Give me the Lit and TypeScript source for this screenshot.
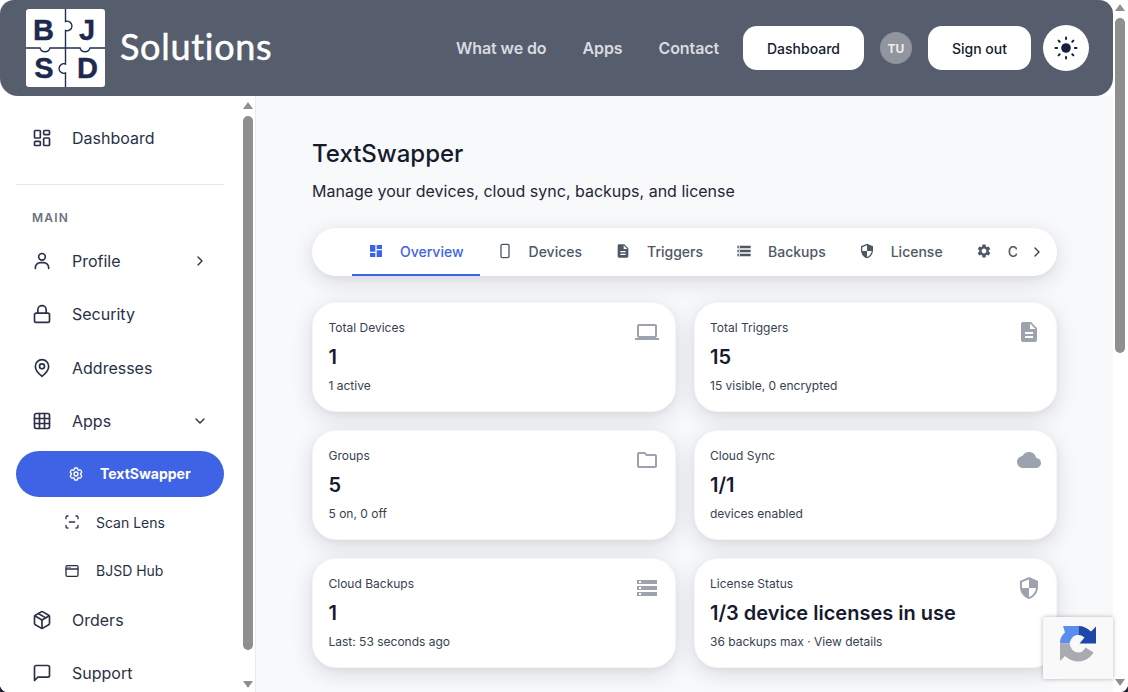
import { css, html, svg, LitElement } from 'lit';
import { customElement } from 'lit/decorators.js';

const line = (...d: string[]) => html`<svg class="ic" viewBox="0 0 24 24" fill="none" stroke="currentColor" stroke-width="2" stroke-linecap="round" stroke-linejoin="round">${d.map((p) => svg`<path d=${p}></path>`)}</svg>`;
const fill = (...d: string[]) => html`<svg class="ic" viewBox="0 0 24 24" fill="currentColor">${d.map((p) => svg`<path d=${p}></path>`)}</svg>`;

const icons = {
  dashboard: line('M4 3h5a1 1 0 0 1 1 1v7a1 1 0 0 1-1 1H4a1 1 0 0 1-1-1V4a1 1 0 0 1 1-1z', 'M15 3h5a1 1 0 0 1 1 1v3a1 1 0 0 1-1 1h-5a1 1 0 0 1-1-1V4a1 1 0 0 1 1-1z', 'M15 12h5a1 1 0 0 1 1 1v7a1 1 0 0 1-1 1h-5a1 1 0 0 1-1-1v-7a1 1 0 0 1 1-1z', 'M4 16h5a1 1 0 0 1 1 1v3a1 1 0 0 1-1 1H4a1 1 0 0 1-1-1v-3a1 1 0 0 1 1-1z'),
  user: line('M12 3a4 4 0 1 0 0 8 4 4 0 0 0 0-8z', 'M20 21v-1a6 6 0 0 0-6-6h-4a6 6 0 0 0-6 6v1'),
  lock: line('M5 11h14a2 2 0 0 1 2 2v7a2 2 0 0 1-2 2H5a2 2 0 0 1-2-2v-7a2 2 0 0 1 2-2z', 'M7 11V7a5 5 0 0 1 10 0v4'),
  pin: line('M20 10c0 6-8 12-8 12s-8-6-8-12a8 8 0 0 1 16 0z', 'M12 7a3 3 0 1 0 0 6 3 3 0 0 0 0-6z'),
  grid: line('M5 3h14a2 2 0 0 1 2 2v14a2 2 0 0 1-2 2H5a2 2 0 0 1-2-2V5a2 2 0 0 1 2-2z', 'M3 9h18', 'M3 15h18', 'M9 3v18', 'M15 3v18'),
  cog: line('M9.594 3.94c.09-.542.56-.94 1.11-.94h2.593c.55 0 1.02.398 1.11.94l.213 1.281c.063.374.313.686.645.87.074.04.147.083.22.127.325.196.72.257 1.075.124l1.217-.456a1.125 1.125 0 0 1 1.37.49l1.296 2.247a1.125 1.125 0 0 1-.26 1.431l-1.003.827c-.293.241-.438.613-.43.992a7.723 7.723 0 0 1 0 .255c-.008.378.137.75.43.991l1.004.827c.424.35.534.955.26 1.43l-1.298 2.247a1.125 1.125 0 0 1-1.369.491l-1.217-.456c-.355-.133-.75-.072-1.076.124a6.47 6.47 0 0 1-.22.128c-.331.183-.581.495-.644.869l-.213 1.281c-.09.543-.56.94-1.11.94h-2.594c-.55 0-1.019-.398-1.11-.94l-.213-1.281c-.062-.374-.312-.686-.644-.87a6.52 6.52 0 0 1-.22-.127c-.325-.196-.72-.257-1.076-.124l-1.217.456a1.125 1.125 0 0 1-1.369-.49l-1.297-2.247a1.125 1.125 0 0 1 .26-1.431l1.004-.827c.292-.24.437-.613.43-.991a6.932 6.932 0 0 1 0-.255c.007-.38-.138-.751-.43-.992l-1.004-.827a1.125 1.125 0 0 1-.26-1.43l1.297-2.247a1.125 1.125 0 0 1 1.37-.491l1.216.456c.356.133.751.072 1.076-.124.072-.044.146-.086.22-.128.332-.183.582-.495.644-.869l.214-1.28z', 'M12 9a3 3 0 1 0 0 6 3 3 0 0 0 0-6z'),
  scan: line('M3 7V5a2 2 0 0 1 2-2h1', 'M18 3h1a2 2 0 0 1 2 2v2', 'M21 17v2a2 2 0 0 1-2 2h-1', 'M6 21H5a2 2 0 0 1-2-2v-2', 'M8 12h8'),
  windowed: line('M5 4h14a2 2 0 0 1 2 2v12a2 2 0 0 1-2 2H5a2 2 0 0 1-2-2V6a2 2 0 0 1 2-2z', 'M3 9h18', 'M6 6.5h.01', 'M9 6.5h.01'),
  box: line('M21 8a2 2 0 0 0-1-1.73l-7-4a2 2 0 0 0-2 0l-7 4A2 2 0 0 0 3 8v8a2 2 0 0 0 1 1.73l7 4a2 2 0 0 0 2 0l7-4A2 2 0 0 0 21 16z', 'M3.3 7l8.7 5 8.7-5', 'M12 22V12', 'M7.5 4.27l9 5.15'),
  chat: line('M21 15a2 2 0 0 1-2 2H7l-4 4V5a2 2 0 0 1 2-2h14a2 2 0 0 1 2 2z'),
  right: line('M9 6l6 6-6 6'),
  down: line('M6 9l6 6 6-6'),
  overview: fill('M3 13h8V3H3v10zm0 8h8v-6H3v6zm10 0h8V11h-8v10zm0-18v6h8V3h-8z'),
  phone: line('M8 2h8a2 2 0 0 1 2 2v16a2 2 0 0 1-2 2H8a2 2 0 0 1-2-2V4a2 2 0 0 1 2-2z'),
  doc: fill('M14 2H6c-1.1 0-1.99.9-1.99 2L4 20c0 1.1.89 2 1.99 2H18c1.1 0 2-.9 2-2V8l-6-6zm2 16H8v-2h8v2zm0-4H8v-2h8v2zm-3-5V3.5L18.5 9H13z'),
  rows: fill('M2 20h20v-4H2v4zm2-3h2v2H4v-2zM2 4v4h20V4H2zm4 3H4V5h2v2zm-4 7h20v-4H2v4zm2-3h2v2H4v-2z'),
  shield: fill('M12 1L3 5v6c0 5.55 3.84 10.74 9 12 5.16-1.26 9-6.45 9-12V5l-9-4zm0 10.99h7c-.53 4.12-3.28 7.79-7 8.94V12H5V6.3l7-3.11v8.8z'),
  gear: fill('M19.14 12.94c.04-.3.06-.61.06-.94 0-.32-.02-.64-.07-.94l2.03-1.58c.18-.14.23-.41.12-.61l-1.92-3.32c-.12-.22-.37-.29-.59-.22l-2.39.96c-.5-.38-1.03-.7-1.62-.94L14.4 2.81c-.04-.24-.24-.41-.48-.41h-3.84c-.24 0-.43.17-.47.41L9.25 5.35c-.59.24-1.13.57-1.62.94l-2.39-.96c-.22-.08-.47 0-.59.22L2.74 8.87c-.12.21-.08.47.12.61l2.03 1.58c-.05.3-.09.63-.09.94s.02.64.07.94l-2.03 1.58c-.18.14-.23.41-.12.61l1.92 3.32c.12.22.37.29.59.22l2.39-.96c.5.38 1.03.7 1.62.94l.36 2.54c.05.24.24.41.48.41h3.84c.24 0 .44-.17.47-.41l.36-2.54c.59-.24 1.13-.56 1.62-.94l2.39.96c.22.08.47 0 .59-.22l1.92-3.32c.12-.22.07-.47-.12-.61l-2.01-1.58zM12 15.6c-1.98 0-3.6-1.62-3.6-3.6s1.62-3.6 3.6-3.6 3.6 1.62 3.6 3.6-1.62 3.6-3.6 3.6z'),
  laptop: fill('M20 18c1.1 0 1.99-.9 1.99-2L22 6c0-1.1-.9-2-2-2H4c-1.1 0-2 .9-2 2v10c0 1.1.9 2 2 2H0v2h24v-2h-4zM4 6h16v10H4V6z'),
  folder: fill('M9.17 6l2 2H20v10H4V6h5.17M10 4H4c-1.1 0-1.99.9-1.99 2L2 18c0 1.1.9 2 2 2h16c1.1 0 2-.9 2-2V8c0-1.1-.9-2-2-2h-8l-2-2z'),
  cloud: fill('M19.35 10.04C18.67 6.59 15.64 4 12 4 9.11 4 6.6 5.64 5.35 8.04 2.34 8.36 0 10.91 0 14c0 3.31 2.69 6 6 6h13c2.76 0 5-2.24 5-5 0-2.64-2.05-4.78-4.65-4.96z'),
};

const tabs = [
  ['Overview', icons.overview],
  ['Devices', icons.phone],
  ['Triggers', icons.doc],
  ['Backups', icons.rows],
  ['License', icons.shield],
  ['Cloud', icons.gear],
] as const;

const cards = [
  ['Total Devices', '1', '1 active', icons.laptop],
  ['Total Triggers', '15', '15 visible, 0 encrypted', icons.doc],
  ['Groups', '5', '5 on, 0 off', icons.folder],
  ['Cloud Sync', '1/1', 'devices enabled', icons.cloud],
  ['Cloud Backups', '1', 'Last: 53 seconds ago', icons.rows],
  ['License Status', '1/3 device licenses in use', '36 backups max · View details', icons.shield],
] as const;

@customElement('app-root')
export class AppRoot extends LitElement {
  static override styles = css`
    :host {
      display: block;
      height: 692px;
      overflow: hidden;
      background: #20242c;
      font-family: Inter, 'Liberation Sans', sans-serif;
    }

    * {
      box-sizing: border-box;
    }

    .ic {
      display: block;
      width: 100%;
      height: 100%;
    }

    .page {
      position: relative;
      display: grid;
      grid-template-columns: 1fr 15px;
      height: 692px;
      overflow: hidden;
      background: #fff;
      border-radius: 0 0 8px 8px;
    }

    .left {
      display: flex;
      flex-direction: column;
      min-width: 0;
      height: 692px;
      background: #f8f9fb;
    }

    .header-wrap {
      background: #fff;
    }

    header {
      flex: none;
      display: flex;
      align-items: center;
      height: 96px;
      padding: 0 24px 0 26px;
      background: #565d6d;
      border-radius: 14px 14px 18px 18px;
    }

    .logo {
      display: block;
      width: 79px;
      height: 78px;
      flex: none;
    }

    .logo text {
      font-family: 'Liberation Sans', sans-serif;
      font-weight: 700;
      font-size: 29px;
      fill: #1b2a4d;
      stroke: #1b2a4d;
      stroke-width: 0.4px;
      text-anchor: middle;
    }

    .brand {
      margin: 0 0 5px 15px;
      font-family: Lato, sans-serif;
      font-size: 36px;
      line-height: 40px;
      font-weight: 400;
      letter-spacing: 0.7px;
      -webkit-text-stroke: 0.5px #fff;
      color: #fff;
    }

    .links {
      display: flex;
      gap: 36px;
      margin-left: auto;
    }

    .links span {
      font-size: 16px;
      font-weight: 600;
      letter-spacing: -0.1px;
      color: #d9dbe0;
    }

    .btn {
      display: flex;
      align-items: center;
      justify-content: center;
      height: 44px;
      border-radius: 14px;
      background: #fff;
      font-size: 14px;
      font-weight: 500;
      color: #151b2e;
    }

    .btn.dash {
      width: 121px;
      margin-left: 24px;
    }

    .btn.out {
      width: 103px;
      margin-left: 16px;
    }

    .avatar {
      display: flex;
      align-items: center;
      justify-content: center;
      width: 32px;
      height: 32px;
      margin-left: 16px;
      border-radius: 50%;
      background: #92959f;
      font-size: 12px;
      font-weight: 700;
      color: #eceef1;
    }

    .theme {
      display: flex;
      align-items: center;
      justify-content: center;
      width: 46px;
      height: 46px;
      margin-left: 12px;
      border-radius: 50%;
      background: #fff;
    }

    .theme svg {
      display: block;
      width: 24px;
      height: 24px;
    }

    .body {
      flex: 1;
      display: flex;
      min-height: 0;
    }

    aside {
      flex: none;
      display: flex;
      width: 256px;
      background: #fff;
      border-right: 1px solid #e9ebef;
      overflow: hidden;
    }

    nav {
      flex: none;
      width: 240px;
      padding-top: 15.3px;
      color: #2a3147;
    }

    .item {
      display: flex;
      align-items: center;
      height: 53.33px;
      margin: 0 16px;
      padding: 0 16px;
      font-size: 16px;
    }

    .item .i {
      flex: none;
      width: 20px;
      height: 20px;
      margin-right: 20px;
    }

    .item .chev {
      flex: none;
      width: 16px;
      height: 16px;
      margin-left: auto;
    }

    .rule {
      height: 1px;
      margin: 19px 16px 26.2px;
      background: #e7e9ee;
    }

    .section {
      margin: -0.5px 32px 8px;
      font-size: 12px;
      line-height: 16px;
      font-weight: 600;
      letter-spacing: 1.2px;
      color: #6b7280;
    }

    .subs {
      display: flex;
      flex-direction: column;
      gap: 2.5px;
      margin: 3px 0 -0.4px;
    }

    .sub {
      display: flex;
      align-items: center;
      height: 46px;
      margin: 0 16px;
      padding-left: 48px;
      border-radius: 23px;
      font-size: 14px;
    }

    .sub .i {
      flex: none;
      width: 16px;
      height: 16px;
      margin-right: 16px;
    }

    .sub.on {
      padding-left: 52px;
      background: #3f63e5;
      color: #fff;
      font-weight: 700;
    }

    .bar {
      flex: none;
      display: flex;
      flex-direction: column;
      align-items: center;
      width: 10px;
    }

    aside .bar {
      margin-left: 3px;
      padding: 6px 0 4px;
    }

    .rail {
      background: #fff;
      padding: 4px 3px 6px 2px;
      height: 692px;
    }

    .rail .bar {
      height: 100%;
    }

    .up,
    .dn {
      flex: none;
      width: 0;
      height: 0;
      border-left: 5px solid transparent;
      border-right: 5px solid transparent;
    }

    .up {
      border-bottom: 7px solid #8f8f8f;
    }

    .dn {
      border-top: 7px solid #8f8f8f;
      margin-top: auto;
    }

    .thumb {
      width: 10px;
      border-radius: 5px;
      background: #8f8f8f;
    }

    aside .thumb {
      height: 534px;
      margin-top: 7px;
    }

    .rail .thumb {
      height: 335px;
      margin-top: 7px;
    }

    main {
      flex: 1;
      min-width: 0;
      padding: 42px 56px 0;
      overflow: hidden;
    }

    h1 {
      margin: 0;
      font-size: 24px;
      line-height: 32px;
      font-weight: 500;
      color: #151b2e;
    }

    .lead {
      margin: 9px 0 25px;
      font-size: 16px;
      line-height: 24px;
      color: #1f2637;
    }

    .tabbar {
      position: relative;
      height: 48px;
      padding: 0 40px;
      border-radius: 24px;
      background: #fff;
      box-shadow: 0 6px 22px rgba(17, 24, 39, 0.13), 0 2px 6px rgba(17, 24, 39, 0.04);
    }

    .strip {
      display: flex;
      height: 48px;
      overflow: hidden;
    }

    .tab {
      flex: none;
      display: flex;
      align-items: center;
      height: 48px;
      padding: 0 16px;
      border-bottom: 2px solid transparent;
      font-size: 14px;
      font-weight: 500;
      color: #4f5766;
    }

    .tab + .tab {
      margin-left: 1px;
    }

    .tab .i {
      flex: none;
      width: 16px;
      height: 16px;
      margin-right: 16px;
    }

    .tab.on {
      border-bottom-color: #3f63e5;
      color: #3f63e5;
    }

    .more {
      position: absolute;
      top: 16px;
      right: 12px;
      width: 16px;
      height: 16px;
      color: #374151;
    }

    .grid {
      display: grid;
      grid-template-columns: 1fr 1fr;
      grid-auto-rows: 110px;
      gap: 18px;
      margin-top: 26px;
    }

    .card {
      position: relative;
      padding: 16px 15.5px;
      border: 1px solid #f6f7f9;
      border-radius: 24px;
      background: #fff;
      box-shadow: 0 6px 22px rgba(17, 24, 39, 0.13), 0 2px 6px rgba(17, 24, 39, 0.04);
    }

    .card .label {
      margin-top: 1px;
      font-size: 12px;
      line-height: 16px;
      color: #374151;
    }

    .card .value {
      margin-top: 7px;
      font-size: 20px;
      line-height: 28px;
      font-weight: 600;
      color: #151b2e;
    }

    .card .note {
      margin-top: 7px;
      font-size: 12px;
      line-height: 16px;
      color: #374151;
    }

    .card .i {
      position: absolute;
      top: 17px;
      right: 15.5px;
      width: 24px;
      height: 24px;
      color: #9ca3af;
    }

    .captcha {
      position: absolute;
      left: 1043px;
      top: 617px;
      width: 70px;
      height: 62px;
      padding: 8px 0 0 17px;
      background: #f9f9f9;
      box-shadow: 0 0 4px rgba(0, 0, 0, 0.28);
      border-radius: 2px 0 0 2px;
    }

    .captcha svg {
      display: block;
      width: 37px;
      height: 37px;
    }
  `;

  override render() {
    return html`
      <div class="page">
        <div class="left">
          <div class="header-wrap">
            <header>
              ${this.renderLogo()}
              <span class="brand">Solutions</span>
              <div class="links"><span>What we do</span><span>Apps</span><span>Contact</span></div>
              <div class="btn dash">Dashboard</div>
              <div class="avatar">TU</div>
              <div class="btn out">Sign out</div>
              <div class="theme">${this.renderSun()}</div>
            </header>
          </div>
          <div class="body">
            <aside>
              <nav>
                ${this.renderItem('Dashboard', icons.dashboard)}
                <div class="rule"></div>
                <div class="section">MAIN</div>
                ${this.renderItem('Profile', icons.user, icons.right)}
                ${this.renderItem('Security', icons.lock)}
                ${this.renderItem('Addresses', icons.pin)}
                ${this.renderItem('Apps', icons.grid, icons.down)}
                <div class="subs">
                  <div class="sub on"><span class="i">${icons.cog}</span>TextSwapper</div>
                  <div class="sub"><span class="i">${icons.scan}</span>Scan Lens</div>
                  <div class="sub"><span class="i">${icons.windowed}</span>BJSD Hub</div>
                </div>
                ${this.renderItem('Orders', icons.box)}
                ${this.renderItem('Support', icons.chat)}
              </nav>
              <div class="bar"><div class="up"></div><div class="thumb"></div><div class="dn"></div></div>
            </aside>
            <main>
              <h1>TextSwapper</h1>
              <p class="lead">Manage your devices, cloud sync, backups, and license</p>
              <div class="tabbar">
                <div class="strip">
                  ${tabs.map(([name, icon], i) => html`
                    <div class="tab ${i === 0 ? 'on' : ''}"><span class="i">${icon}</span>${name}</div>
                  `)}
                </div>
                <span class="more">${icons.right}</span>
              </div>
              <div class="grid">
                ${cards.map(([label, value, note, icon]) => html`
                  <div class="card">
                    <div class="label">${label}</div>
                    <div class="value">${value}</div>
                    <div class="note">${note}</div>
                    <span class="i">${icon}</span>
                  </div>
                `)}
              </div>
            </main>
          </div>
        </div>
        <div class="rail">
          <div class="bar"><div class="up"></div><div class="thumb"></div><div class="dn"></div></div>
        </div>
        <div class="captcha">${this.renderCaptcha()}</div>
      </div>
    `;
  }

  private renderItem(name: string, icon: unknown, chevron?: unknown) {
    return html`
      <div class="item">
        <span class="i">${icon}</span>${name}
        ${chevron ? html`<span class="chev">${chevron}</span>` : ''}
      </div>
    `;
  }

  private renderLogo() {
    return html`
      <svg class="logo" viewBox="0 0 79 78">
        <rect width="79" height="78" rx="3" fill="#fff"></rect>
        <path d="M39.5 0V12.5A4.8 4.8 0 1 1 39.5 21.5V55A4.8 4.8 0 1 0 39.5 64V78M0 39H14A5.2 5.2 0 0 0 24 39H54A5.2 5.2 0 0 0 64 39H79" fill="none" stroke="#1f2e52" stroke-width="1.4"></path>
        <text x="17.500" y="31">B</text>
        <text x="61" y="31">J</text>
        <text x="18" y="69">S</text>
        <text x="61.500" y="69">D</text>
      </svg>
    `;
  }

  private renderSun() {
    return html`
      <svg viewBox="0 0 24 24" fill="#14213d" stroke="#14213d" stroke-width="2" stroke-linecap="round">
        <circle cx="12" cy="12" r="4.8" stroke="none"></circle>
        <path d="M12 1.500v1.600M12 20.900v1.600M1.500 12h1.600M20.900 12h1.600M4.600 4.600L5.700 5.700M18.300 18.300l1.100 1.100M4.600 19.400L5.700 18.300M18.300 5.700l1.100-1.100"></path>
      </svg>
    `;
  }

  private renderCaptcha() {
    return html`
      <svg viewBox="0 0 37 37">
        <path d="M3 1H18.5V10C14 10 11 12.5 9.5 18.5H0C0 13 2 10 5 7.500Z" fill="#5b8def"></path>
        <path d="M18.500 1C23 1 27.500 3 31 6.500L36 1.500V18.500H19.500L24.500 12.500C22.500 10.800 20.500 10 18.500 10Z" fill="#1f47a8"></path>
        <path d="M0 18.500V36L5 31C8.500 34.500 13.500 36.500 18.500 36.500C25 36.500 30 33 33.500 27.500L25.500 22.500C24 25.500 21.500 27.500 18.500 27.500C14 27.500 11 24.500 9.500 18.500Z" fill="#a9abb0"></path>
      </svg>
    `;
  }
}

declare global {
  interface HTMLElementTagNameMap {
    'app-root': AppRoot;
  }
}
